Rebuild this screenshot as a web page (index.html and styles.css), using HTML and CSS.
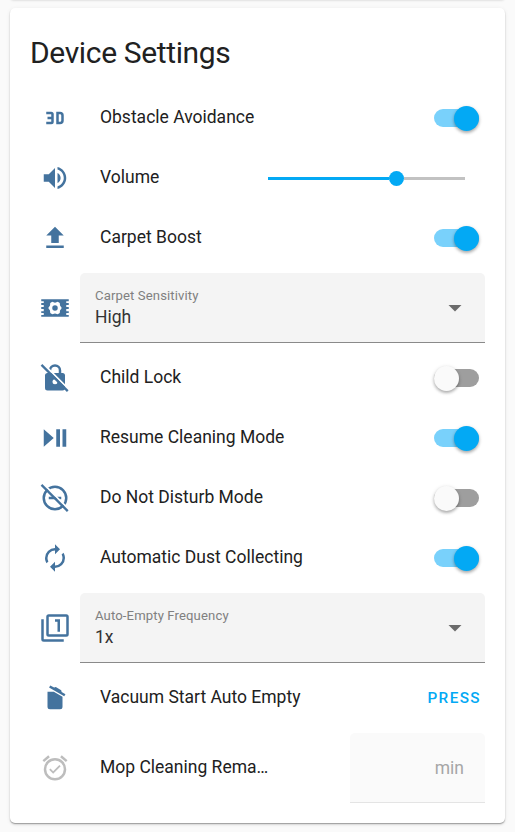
FILE: index.html
```
<!DOCTYPE html>
<html lang="en">
<head>
<meta charset="utf-8">
<title>Device Settings</title>
<link rel="stylesheet" href="styles.css">
</head>
<body>
<div class="previous-card"></div>
<main class="card">
  <h1 class="title">Device Settings</h1>
  <div class="rows">
    <div class="row">
      <span class="icon"><svg viewBox="0 0 24 24"><path d="M5,7H9A2,2 0 0,1 11,9V15A2,2 0 0,1 9,17H5V15H9V13H6V11H9V9H5V7M13,7H16A3,3 0 0,1 19,10V14A3,3 0 0,1 16,17H13V7M16,15A1,1 0 0,0 17,14V10A1,1 0 0,0 16,9H15V15H16Z"/></svg></span>
      <span class="name">Obstacle Avoidance</span>
      <span class="switch on"><span class="thumb"></span></span>
    </div>
    <div class="row">
      <span class="icon"><svg viewBox="0 0 24 24"><path d="M14,3.23V5.29C16.89,6.15 19,8.83 19,12C19,15.17 16.89,17.84 14,18.7V20.77C18,19.86 21,16.28 21,12C21,7.72 18,4.14 14,3.23M16.5,12C16.5,10.23 15.5,8.71 14,7.97V16C15.5,15.29 16.5,13.76 16.5,12M3,9V15H7L12,20V4L7,9H3Z"/></svg></span>
      <span class="name">Volume</span>
      <span class="slider"><span class="filled"></span><span class="knob"></span><span class="remaining"></span></span>
    </div>
    <div class="row">
      <span class="icon"><svg viewBox="0 0 24 24"><path d="M9,16V10H5L12,3L19,10H15V16H9M5,20V18H19V20H5Z"/></svg></span>
      <span class="name">Carpet Boost</span>
      <span class="switch on"><span class="thumb"></span></span>
    </div>
    <div class="row field-row">
      <span class="icon"><svg viewBox="0 0 24 24"><path fill-rule="evenodd" d="M1,5H23V6.5H21V8H23V9.5H21V11.2H23V12.8H21V14.5H23V16H21V17.5H23V19H1V17.5H3V16H1V14.5H3V12.8H1V11.2H3V9.5H1V8H3V6.5H1ZM9.8,7L8.2,8L8,10L6.6,12L8,14L8.2,16L9.8,17L12,16.3L14.2,17L15.8,16L16,14L17.4,12L16,10L15.8,8L14.2,7L12,7.7ZM12,9.8A2.2,2.2 0 1,1 12,14.2A2.2,2.2 0 1,1 12,9.8Z"/></svg></span>
      <div class="select"><span class="value"><small>Carpet Sensitivity</small><span>High</span></span><svg class="arrow" viewBox="0 0 14 7"><path d="M0 0H14L7 7Z"/></svg></div>
    </div>
    <div class="row">
      <span class="icon"><svg viewBox="0 0 24 24"><defs><mask id="lock-cut"><path fill="#fff" d="M0 0H24V24H0Z"/><path stroke="#000" stroke-width="1.5" d="M2.2 .2L23.9 21.9"/><circle cx="12" cy="15" r="2" fill="#000"/></mask></defs><g mask="url(#lock-cut)"><path d="M6 8H18A2 2 0 0 1 20 10V20A2 2 0 0 1 18 22H6A2 2 0 0 1 4 20V10A2 2 0 0 1 6 8Z"/><path class="line" d="M8 6A4 4 0 0 1 16 6V9"/></g><path class="line slash" d="M1.2 1.5L22.2 22.5"/></svg></span>
      <span class="name">Child Lock</span>
      <span class="switch"><span class="thumb"></span></span>
    </div>
    <div class="row">
      <span class="icon"><svg viewBox="0 0 24 24"><path d="M3,5V19L11,12M13,19H16V5H13M18,5V19H21V5"/></svg></span>
      <span class="name">Resume Cleaning Mode</span>
      <span class="switch on"><span class="thumb"></span></span>
    </div>
    <div class="row">
      <span class="icon"><svg viewBox="0 0 24 24"><defs><mask id="dnd-cut"><path fill="#fff" d="M0 0H24V24H0Z"/><path stroke="#000" stroke-width="1.5" d="M2.2 .2L23.9 21.9"/></mask></defs><g mask="url(#dnd-cut)"><circle class="line" cx="12" cy="12" r="9"/><path d="M7 11H17V13H7Z"/></g><path class="line slash" d="M1.2 1.5L22.2 22.5"/></svg></span>
      <span class="name">Do Not Disturb Mode</span>
      <span class="switch"><span class="thumb"></span></span>
    </div>
    <div class="row">
      <span class="icon"><svg viewBox="0 0 24 24"><path d="M12,6V9L16,5L12,1V4A8,8 0 0,0 4,12C4,13.57 4.46,15.03 5.24,16.26L6.7,14.8C6.25,13.97 6,13 6,12A6,6 0 0,1 12,6M18.76,7.74L17.3,9.2C17.74,10.04 18,11 18,12A6,6 0 0,1 12,18V15L8,19L12,23V20A8,8 0 0,0 20,12C20,10.43 19.54,8.97 18.76,7.74Z"/></svg></span>
      <span class="name">Automatic Dust Collecting</span>
      <span class="switch on"><span class="thumb"></span></span>
    </div>
    <div class="row field-row">
      <span class="icon"><svg viewBox="0 0 24 24"><path d="M3,5H1V21A2,2 0 0,0 3,23H19V21H3M14,15H16V5H12V7H14M21,1H7A2,2 0 0,0 5,3V17A2,2 0 0,0 7,19H21A2,2 0 0,0 23,17V3A2,2 0 0,0 21,1M21,17H7V3H21V17Z"/></svg></span>
      <div class="select"><span class="value"><small>Auto-Empty Frequency</small><span>1x</span></span><svg class="arrow" viewBox="0 0 14 7"><path d="M0 0H14L7 7Z"/></svg></div>
    </div>
    <div class="row">
      <span class="icon"><svg viewBox="0 0 24 24"><path d="M20.37,8.91L19.37,10.64L7.24,3.64L8.24,1.91L11.28,3.66L12.64,3.29L16.97,5.79L17.34,7.16L20.37,8.91M6,19V7H11.07L18,11V19A2,2 0 0,1 16,21H8A2,2 0 0,1 6,19Z"/></svg></span>
      <span class="name">Vacuum Start Auto Empty</span>
      <span class="press">PRESS</span>
    </div>
    <div class="row field-row">
      <span class="icon disabled"><svg viewBox="0 0 24 24"><path d="M10.54,14.53L8.41,12.4L7.35,13.46L10.53,16.64L16.53,10.64L15.47,9.58L10.54,14.53M12,20A7,7 0 0,1 5,13A7,7 0 0,1 12,6A7,7 0 0,1 19,13A7,7 0 0,1 12,20M12,4A9,9 0 0,0 3,13A9,9 0 0,0 12,22A9,9 0 0,0 21,13A9,9 0 0,0 12,4M7.88,3.39L6.6,1.86L2,5.71L3.29,7.24L7.88,3.39M22,5.72L17.4,1.86L16.11,3.39L20.71,7.25L22,5.72Z"/></svg></span>
      <span class="name">Mop Cleaning Rema…</span>
      <span class="number">min</span>
    </div>
  </div>
</main>
</body>
</html>
```
FILE: styles.css
```
* { box-sizing: border-box; }
body {
  margin: 0;
  height: 832px;
  padding: 0 10px;
  overflow: hidden;
  background: #fafafa;
  color: #212121;
  font-family: Roboto, sans-serif;
  font-size: 17.5px;
}
.previous-card { height: 8px; margin-top: -8px; margin-bottom: 8px; border-radius: 5px; box-shadow: 0 1px 2px rgba(0,0,0,.1); }
.card {
  height: 815px;
  padding: 20px;
  background: #fff;
  border-radius: 5px;
  box-shadow: 0 2px 2px rgba(0,0,0,.08), 0 1px 4px rgba(0,0,0,.08), 0 1px 1px rgba(0,0,0,.28);
}
.title {
  margin: 0;
  height: 65px;
  line-height: 50px;
  font-size: 30px;
  font-weight: 400;
  letter-spacing: -.36px;
}
.rows { display: flex; flex-direction: column; gap: 10px; }
.row { display: flex; align-items: center; height: 50px; }
.field-row { height: 70px; }
.icon { flex: none; display: flex; justify-content: center; width: 50px; color: #44739e; }
.icon svg { width: 30px; height: 30px; fill: currentColor; }
.icon .line { fill: none; stroke: currentColor; stroke-width: 2; }
.icon .slash { stroke-width: 1.9; }
.icon.disabled { color: #bdbdbd; }
.name { flex: 1; padding-left: 20px; line-height: 25px; margin-top: -2px; white-space: nowrap; }
.switch {
  display: flex;
  align-items: center;
  width: 45px;
  height: 17.5px;
  margin-right: 6.25px;
  border-radius: 9px;
  background: #9e9e9e;
}
.thumb {
  flex: none;
  width: 25px;
  height: 25px;
  border-radius: 50%;
  background: #fafafa;
  box-shadow: 0 2px 3px rgba(0,0,0,.24), 0 1px 4px rgba(0,0,0,.14);
}
.switch.on { justify-content: flex-end; background: #79d1fb; }
.switch.on .thumb { background: #03a9f4; }
.slider { display: flex; align-items: center; width: 197px; margin-right: 20px; }
.filled { width: 120.5px; height: 3px; background: #03a9f4; }
.knob { width: 15px; height: 15px; border-radius: 50%; background: #03a9f4; }
.remaining { flex: 1; height: 3px; background: #c2c2c2; }
.select {
  display: flex;
  align-items: center;
  justify-content: space-between;
  width: 405px;
  height: 70px;
  padding: 0 23px 0 15px;
  border-bottom: 1px solid #8a8a8a;
  border-radius: 5px 5px 0 0;
  background: #f4f4f4;
}
.value { display: flex; flex-direction: column; color: #333; line-height: 22px; }
.value small { height: 19px; color: #808080; font-size: 13.125px; line-height: 17px; letter-spacing: .12px; }
.arrow { width: 14px; height: 6.5px; margin-top: 2px; fill: #6b6b6b; }
.press { margin-right: 4px; color: #03a9f4; font-size: 15.3px; font-weight: 500; letter-spacing: 1.4px; }
.number {
  display: flex;
  align-items: center;
  justify-content: flex-end;
  width: 135px;
  height: 70px;
  padding-right: 21px;
  border-bottom: 1px solid #e4e4e4;
  border-radius: 5px 5px 0 0;
  background: #fafafa;
  color: #a6a6a6;
}
```
